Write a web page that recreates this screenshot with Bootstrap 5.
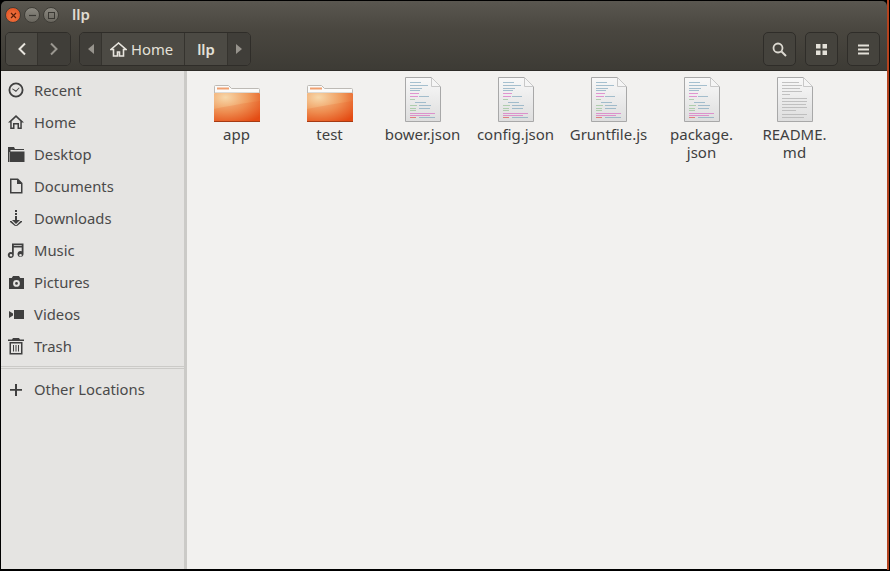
<!DOCTYPE html>
<html lang="en">
<head>
<meta charset="UTF-8">
<meta name="viewport" content="width=device-width, initial-scale=1.0">
<link href="https://cdn.jsdelivr.net/npm/bootstrap@5.3.3/dist/css/bootstrap.min.css" rel="stylesheet">
<style>
    html, body { height: 100%; margin: 0; overflow: hidden; background: #000; }
    body { font-family: "Noto Sans", "Liberation Sans", sans-serif; font-size: 14.8px; }
    .win { height: 570px; margin-left: 1px; margin-right: 1px; border-right: 2px solid #b5431f; padding-top: 1px; background: #000; }
    .titlebar { height: 28px; background: linear-gradient(#5a5750, #4a4740); color: #e0dcd2; padding-left: 4px; border-top-right-radius: 5px; border-top-left-radius: 5px; }
    .titlebar .ttl { font-weight: 600; font-size: 15px; margin-left: 10px; margin-top: -1px; }
    .wbtn { width: 16px; height: 16px; border-radius: 50%; margin-right: 3px; background: linear-gradient(#8b8880, #6a675f); border: 1px solid #3f3d37; }
    .wbtn.closer { background: radial-gradient(circle at 50% 60%, #f47a45, #dc4a1c); }
    .toolbar { height: 42px; background: linear-gradient(#4a4740, #3d3b35); padding: 3px 4px 4px 4px; border-bottom: 1px solid #2e2c28; }
    .tgroup { height: 34px; border: 1px solid #2f2d29; border-radius: 5px; overflow: hidden; background: #4a4842; }
    .tcell { height: 100%; color: #e4e1d9; border-right: 1px solid #35332e; }
    .tcell:last-child { border-right: 0; }
    .tcell.dim { background: #403e39; }
    .tcell.lit { background: #4c4a44; }
    .roundbtn { width: 33px; height: 34px; border: 1px solid #2f2d29; border-radius: 5px; background: #45433d; margin-left: 9px; }
    .main { height: 498px; }
    .side { width: 183px; background: #e5e4e2; color: #4a4a4a; padding-top: 3px; }
    .side-item { height: 32px; padding-left: 6px; }
    .side-item svg { width: 18px; height: 18px; margin-right: 9px; fill: #3f3f3f; flex: none; }
    .side-sep { height: 3px; margin: 4px 0 4px; border-top: 1px solid #cbcac7; border-bottom: 1px solid #cbcac7; }
    .sash { width: 3px; background: #cbcac7; }
    .files { background: #f2f1ef; padding: 5px 0 0 3px; color: #3f3f3f; font-size: 15px; }
    .fitem { width: 93px; text-align: center; line-height: 18px; }
    .ficon { height: 46px; margin-bottom: 3px; }
</style>
<title>llp</title>
</head>
<body>

<svg width="0" height="0" class="position-absolute">
    <defs>
        <radialGradient id="fbody" cx="0.25" cy="0.15" r="1">
            <stop offset="0" stop-color="#f7d8aa"/><stop offset="0.5" stop-color="#f09c5e"/><stop offset="1" stop-color="#e34a12"/>
        </radialGradient>
        <linearGradient id="dpage" x1="0" y1="0" x2="0" y2="1">
            <stop offset="0" stop-color="#f8f8f8"/><stop offset="1" stop-color="#dedede"/>
        </linearGradient>
    </defs>
    <symbol id="folder" viewBox="0 0 46 37">
        <path d="M.5 8V1.500q0-1 1-1h13l3 3h27q1 0 1 1V8z" fill="#fbfbfa" stroke="#bdbab5"/>
        <rect x="3" y="2.500" width="12" height="2" fill="#f0a070"/>
        <rect x="0" y="8" width="46" height="29" rx="1" fill="url(#fbody)"/>
        <path d="M0 24Q20 20 46 16V37H0z" fill="#e8541c" opacity=".18"/>
        <rect x="0" y="36" width="46" height="1" fill="#a63a12"/>
    </symbol>
    <symbol id="doc" viewBox="0 0 36 45">
        <path d="M.5.5h26l9 9v35H.5z" fill="url(#dpage)" stroke="#a8a8a8"/>
        <path d="M26.500.5l9 9h-9z" fill="#f5f5f5" stroke="#c8c8c8"/>
        <g opacity=".8">
            <g fill="#7aa3bb">
                <rect x="5" y="5" width="11" height=".8"/><rect x="5" y="8" width="18" height=".8"/><rect x="5" y="11" width="12" height=".8"/><rect x="5" y="13" width="10" height=".8"/>
                <rect x="14" y="19" width="10" height=".8"/><rect x="10" y="25" width="11" height=".8"/><rect x="14" y="28" width="12" height=".8"/><rect x="14" y="31" width="11" height=".8"/><rect x="14" y="40" width="16" height=".8"/>
            </g>
            <g fill="#d963c0">
                <rect x="5" y="16" width="9" height=".8"/><rect x="5" y="19" width="8" height=".8"/>
                <rect x="5" y="36" width="25" height=".8"/><rect x="5" y="38" width="20" height=".8"/>
            </g>
            <g fill="#8fc08f">
                <rect x="5" y="22" width="5" height=".8"/><rect x="5" y="28" width="7" height=".8"/><rect x="5" y="31" width="6" height=".8"/><rect x="5" y="33" width="6" height=".8"/>
            </g>
            <rect x="5" y="40" width="6" height=".8" fill="#e04848"/>
        </g>
    </symbol>
    <symbol id="txt" viewBox="0 0 36 45">
        <path d="M.5.5h26l9 9v35H.5z" fill="url(#dpage)" stroke="#a8a8a8"/>
        <path d="M26.500.5l9 9h-9z" fill="#f5f5f5" stroke="#c8c8c8"/>
        <path d="M5 5.500h17M5 8.500h20M5 11.500h18M5 14.500h20M5 17.500h8M5 21.500h25M5 24.500h25M5 27.500h24M5 30.500h25M5 33.500h14M5 37.500h25M5 40.500h22" stroke="#b5b5b5" stroke-width=".8" fill="none"/>
    </symbol>
</svg>

<div class="win d-flex flex-column">
    <div class="titlebar d-flex align-items-center">
        <span class="wbtn closer d-flex align-items-center justify-content-center">
            <svg width="7" height="7" viewBox="0 0 7 7"><path d="M1 1l5 5M6 1L1 6" stroke="#5a1d08" stroke-width="1.2"/></svg>
        </span>
        <span class="wbtn d-flex align-items-center justify-content-center">
            <svg width="7" height="7" viewBox="0 0 7 7"><path d="M0 3.500h7" stroke="#3a3833" stroke-width="1.2"/></svg>
        </span>
        <span class="wbtn d-flex align-items-center justify-content-center">
            <svg width="7" height="7" viewBox="0 0 7 7"><rect x=".5" y=".5" width="6" height="6" fill="none" stroke="#3a3833"/></svg>
        </span>
        <span class="ttl">llp</span>
    </div>

    <div class="toolbar d-flex align-items-center">
        <div class="tgroup d-flex">
            <div class="tcell lit d-flex align-items-center justify-content-center" style="width:32px">
                <svg width="10" height="14" viewBox="0 0 10 14"><path d="M8 1.500L2.500 7 8 12.500" fill="none" stroke="#e8e5de" stroke-width="2"/></svg>
            </div>
            <div class="tcell dim d-flex align-items-center justify-content-center" style="width:32px">
                <svg width="10" height="14" viewBox="0 0 10 14"><path d="M2 1.500L7.500 7 2 12.500" fill="none" stroke="#9a9790" stroke-width="2"/></svg>
            </div>
        </div>
        <div class="tgroup d-flex ms-2">
            <div class="tcell dim d-flex align-items-center justify-content-center" style="width:22px">
                <svg width="6" height="10" viewBox="0 0 6 10"><path d="M6 0v10L0 5z" fill="#97948d"/></svg>
            </div>
            <div class="tcell lit d-flex align-items-center ps-2" style="width:83px">
                <svg class="me-1" width="17" height="15" viewBox="0 0 17 15"><path d="M8.500 1L1 7.500h2.500V14h4v-4h2v4h4V7.500H16z" fill="none" stroke="#e8e5de" stroke-width="1.600"/></svg>
                <span>Home</span>
            </div>
            <div class="tcell lit d-flex align-items-center justify-content-center fw-semibold" style="width:43px">llp</div>
            <div class="tcell dim d-flex align-items-center justify-content-center" style="width:22px">
                <svg width="6" height="10" viewBox="0 0 6 10"><path d="M0 0v10l6-5z" fill="#97948d"/></svg>
            </div>
        </div>
        <div class="ms-auto d-flex" style="margin-right:3px">
            <div class="roundbtn d-flex align-items-center justify-content-center">
                <svg width="15" height="15" viewBox="0 0 15 15"><circle cx="6" cy="6" r="4.500" fill="none" stroke="#dcd9d1" stroke-width="1.800"/><path d="M9.500 9.500l4.500 4.500" stroke="#dcd9d1" stroke-width="2"/></svg>
            </div>
            <div class="roundbtn d-flex align-items-center justify-content-center">
                <svg width="11" height="11" viewBox="0 0 11 11"><path d="M0 0h4.500v4.500H0zM6.500 0H11v4.500H6.500zM0 6.500h4.500V11H0zM6.500 6.500H11V11H6.500z" fill="#e4e1d9"/></svg>
            </div>
            <div class="roundbtn d-flex align-items-center justify-content-center">
                <svg width="11" height="11" viewBox="0 0 11 11"><path d="M0 .5h11v2H0zM0 4.500h11v2H0zM0 8.500h11v2H0z" fill="#e4e1d9"/></svg>
            </div>
        </div>
    </div>

    <div class="main d-flex">
        <div class="side">
            <div class="side-item d-flex align-items-center"><svg viewBox="0 0 18 18"><path fill-rule="evenodd" d="M9 1.500a7.500 7.500 0 1 0 0 15 7.500 7.500 0 0 0 0-15zm0 1.800a5.700 5.700 0 1 1 0 11.400A5.700 5.700 0 0 1 9 3.300zM5.500 7.500l3.500 2 3-3 .5.500-3.500 4-4-3z"/></svg>Recent</div>
            <div class="side-item d-flex align-items-center"><svg viewBox="0 0 18 18"><path fill-rule="evenodd" d="M9 2L1 9.500h2.200V16h4.300v-4.500h3V16h4.300V9.500H17zm0 2.200l4.300 4.100V14.500h-1.300V10H6v4.500H4.700V8.300z"/></svg>Home</div>
            <div class="side-item d-flex align-items-center"><svg viewBox="0 0 18 18"><path d="M1 2h6l1 2h9v1H3.500v2H1zM3 6.500h14.500V17H3zM1 4h1.500v13H1z"/></svg>Desktop</div>
            <div class="side-item d-flex align-items-center"><svg viewBox="0 0 18 18"><path fill-rule="evenodd" d="M3 1.500h8l4.500 4.500v10.500H3zm1.500 1.500v12h9.500V7H10V3z"/></svg>Documents</div>
            <div class="side-item d-flex align-items-center"><svg viewBox="0 0 18 18"><path d="M8 1h2v2H8zM8 4h2v2H8zM8 7h2v4h3l-4 4-4-4h3zM3 12l1.500 0 4.500 4.500L13.500 12H15v1l-5 4H8l-5-4z"/></svg>Downloads</div>
            <div class="side-item d-flex align-items-center"><svg viewBox="0 0 18 18"><path fill-rule="evenodd" d="M5 2.500h11.500V13a3 3 0 1 1-1.800-2.700V6.500H6.800V14a3 3 0 1 1-1.800-2.700zM4 13a1.300 1.300 0 1 0 0 2.600A1.300 1.300 0 0 0 4 13zm9.500 0a1.300 1.300 0 1 0 0 2.600 1.300 1.300 0 0 0 0-2.600zM6.800 4.200v.8h7.900v-.8z"/></svg>Music</div>
            <div class="side-item d-flex align-items-center"><svg viewBox="0 0 18 18"><path fill-rule="evenodd" d="M6 3h6l1.200 2H17v11H2V5h2.800zM9.500 7a3.400 3.400 0 1 0 0 6.800 3.400 3.400 0 0 0 0-6.800zm0 2a1.400 1.400 0 1 1 0 2.800 1.400 1.400 0 0 1 0-2.800z"/></svg>Pictures</div>
            <div class="side-item d-flex align-items-center"><svg viewBox="0 0 18 18"><path d="M7 5h10v9H7zM2 6l4 2.500v2L2 13z"/></svg>Videos</div>
            <div class="side-item d-flex align-items-center"><svg viewBox="0 0 18 18"><path fill-rule="evenodd" d="M6 1h6l1 1.500h4V4H1V2.500h4zM2.500 5h13v12.500h-13zM4 6.500V16h10V6.500zM6 8h1v6.500H6zM8.500 8h1v6.500h-1zM11 8h1v6.500h-1z"/></svg>Trash</div>
            <div class="side-sep"></div>
            <div class="side-item d-flex align-items-center"><svg viewBox="0 0 18 18"><path d="M8 4h2v5h5v1.800h-5V16H8v-5.200H3V9h5z"/></svg>Other Locations</div>
        </div>
        <div class="sash"></div>
        <div class="files flex-grow-1 d-flex align-items-start">
            <div class="fitem"><div class="ficon d-flex align-items-end justify-content-center"><svg width="46" height="37"><use href="#folder"/></svg></div>app</div>
            <div class="fitem"><div class="ficon d-flex align-items-end justify-content-center"><svg width="46" height="37"><use href="#folder"/></svg></div>test</div>
            <div class="fitem"><div class="ficon d-flex align-items-end justify-content-center"><svg width="36" height="45"><use href="#doc"/></svg></div>bower.json</div>
            <div class="fitem"><div class="ficon d-flex align-items-end justify-content-center"><svg width="36" height="45"><use href="#doc"/></svg></div>config.json</div>
            <div class="fitem"><div class="ficon d-flex align-items-end justify-content-center"><svg width="36" height="45"><use href="#doc"/></svg></div>Gruntfile.js</div>
            <div class="fitem"><div class="ficon d-flex align-items-end justify-content-center"><svg width="36" height="45"><use href="#doc"/></svg></div>package.<br>json</div>
            <div class="fitem"><div class="ficon d-flex align-items-end justify-content-center"><svg width="36" height="45"><use href="#txt"/></svg></div>README.<br>md</div>
        </div>
    </div>
</div>

</body>
</html>
